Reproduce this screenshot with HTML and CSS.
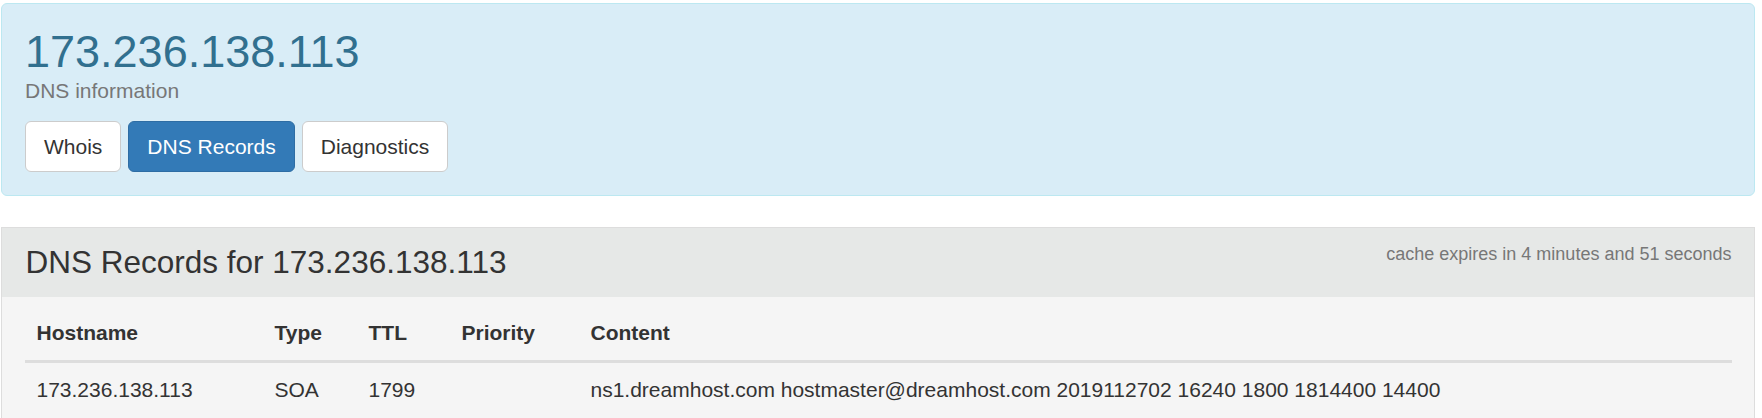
FILE: index.html
```html
<!DOCTYPE html>
<html lang="en">
<head>
<meta charset="utf-8">
<title>173.236.138.113 - DNS information</title>
<link rel="stylesheet" href="styles.css">
</head>
<body>
<div class="page">
  <div class="alert">
    <h1 class="alert-title">173.236.138.113</h1>
    <p class="alert-sub">DNS information</p>
    <div class="tabs">
      <a class="btn">Whois</a>
      <a class="btn btn-primary">DNS Records</a>
      <a class="btn">Diagnostics</a>
    </div>
  </div>

  <div class="panel">
    <div class="panel-heading">
      <h3 class="panel-title">DNS Records for 173.236.138.113</h3>
      <span class="cache">cache expires in 4 minutes and 51 seconds</span>
    </div>
    <div class="panel-body">
      <table class="records">
        <thead>
          <tr>
            <th class="c-host">Hostname</th>
            <th class="c-type">Type</th>
            <th class="c-ttl">TTL</th>
            <th class="c-prio">Priority</th>
            <th class="c-content">Content</th>
          </tr>
        </thead>
        <tbody>
          <tr>
            <td>173.236.138.113</td>
            <td>SOA</td>
            <td>1799</td>
            <td></td>
            <td>ns1.dreamhost.com hostmaster@dreamhost.com 2019112702 16240 1800 1814400 14400</td>
          </tr>
        </tbody>
      </table>
    </div>
  </div>
</div>
</body>
</html>
```

FILE: styles.css
```css
* {
  box-sizing: border-box;
}

html, body {
  margin: 0;
  padding: 0;
  background: #ffffff;
}

body {
  font-family: "Liberation Sans", Arial, Helvetica, sans-serif;
  font-size: 21px;
  line-height: 30px;
  color: #333333;
  overflow: hidden;
}

.page {
  width: 1754px;
  margin: 3px 0 0 1px;
}

/* Top info box */
.alert {
  background: #d9edf7;
  border: 1px solid #bce8f1;
  border-radius: 6px;
  padding: 22.5px 22.5px 22.5px 23px;
  margin-bottom: 31px;
}

.alert-title {
  margin: 0;
  font-size: 45px;
  line-height: 49.5px;
  font-weight: normal;
  color: #31708f;
}

.alert-sub {
  margin: 0;
  font-size: 21px;
  line-height: 30px;
  color: #777777;
}

.tabs {
  display: flex;
  gap: 7px;
  margin-top: 15px;
}

.btn {
  display: inline-block;
  padding: 9px 18px;
  font-size: 21px;
  line-height: 31px;
  color: #333333;
  background: #ffffff;
  border: 1px solid #cccccc;
  border-radius: 6px;
  text-decoration: none;
  white-space: nowrap;
}

.btn-primary {
  color: #ffffff;
  background: #337ab7;
  border-color: #2e6da4;
}

/* Records panel */
.panel {
  border: 1px solid #dddddd;
  border-radius: 0;
  background: #f5f5f5;
}

.panel-heading {
  display: flex;
  justify-content: space-between;
  align-items: flex-start;
  background: #e6e8e7;
  padding: 15px 22.5px 15px 23.5px;
}

.panel-title {
  margin: 0;
  font-size: 31.5px;
  line-height: 39px;
  font-weight: normal;
  color: #333333;
}

.cache {
  font-size: 18px;
  line-height: 21px;
  color: #777777;
  margin-top: 1px;
}

.panel-body {
  padding: 9px 22.5px 22.5px 22.5px;
}

.records {
  width: 100%;
  border-collapse: collapse;
  border-spacing: 0;
  table-layout: fixed;
}

.records th,
.records td {
  padding: 12px;
  text-align: left;
  vertical-align: top;
  line-height: 30px;
  white-space: nowrap;
}

.records th {
  font-weight: bold;
  border-bottom: 3px solid #dddddd;
}

.c-host { width: 238px; }
.c-type { width: 94px; }
.c-ttl { width: 93px; }
.c-prio { width: 129px; }
```
